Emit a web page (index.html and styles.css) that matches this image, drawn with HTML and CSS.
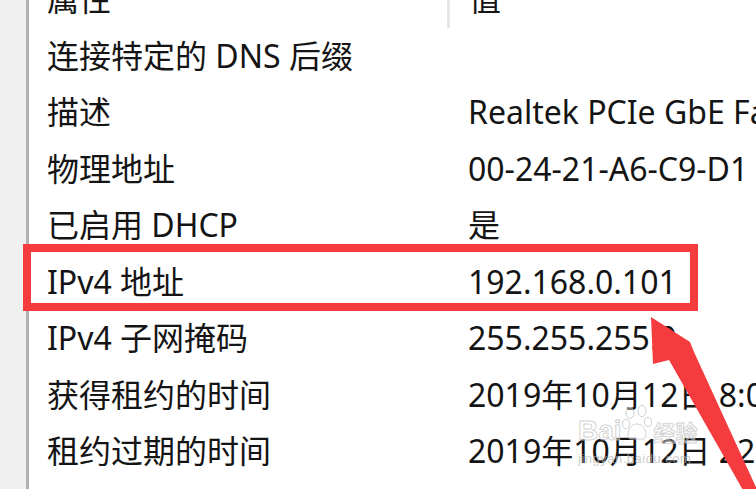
FILE: index.html
```html
<!DOCTYPE html>
<html lang="zh-CN">
<head>
  <meta charset="UTF-8">
  <title>网络连接详细信息</title>
  <link rel="stylesheet" href="styles.css">
</head>
<body>
  <div class="frame">
    <div class="gutter"></div>
    <div class="details">
      <div class="row head">
        <div class="cell name">属性</div>
        <div class="cell value">值</div>
      </div>
      <div class="row">
        <div class="cell name">连接特定的 DNS 后缀</div>
        <div class="cell value"></div>
      </div>
      <div class="row">
        <div class="cell name">描述</div>
        <div class="cell value">Realtek PCIe GbE Family Controller</div>
      </div>
      <div class="row">
        <div class="cell name">物理地址</div>
        <div class="cell value">00-24-21-A6-C9-D1</div>
      </div>
      <div class="row">
        <div class="cell name">已启用 DHCP</div>
        <div class="cell value">是</div>
      </div>
      <div class="row marked">
        <div class="cell name">IPv4 地址</div>
        <div class="cell value">192.168.0.101</div>
      </div>
      <div class="row">
        <div class="cell name">IPv4 子网掩码</div>
        <div class="cell value">255.255.255.0</div>
      </div>
      <div class="row">
        <div class="cell name">获得租约的时间</div>
        <div class="cell value">2019年10月12日 8:03:47</div>
      </div>
      <div class="row">
        <div class="cell name">租约过期的时间</div>
        <div class="cell value">2019年10月12日 22:03:47</div>
      </div>
    </div>

    <!-- watermark -->
    <div class="watermark">
      <div class="wm-logo">
        <span>Bai</span>
        <svg class="paw" width="30" height="36" viewBox="0 0 30 36">
          <ellipse cx="8" cy="8" rx="4" ry="5.5" />
          <ellipse cx="20" cy="6" rx="4" ry="5.5" />
          <ellipse cx="4" cy="19" rx="3.5" ry="4.5" />
          <ellipse cx="26" cy="17" rx="3.5" ry="4.5" />
          <path d="M6 31 C6 22 11 19 15 19 C19 19 24 22 24 31 C24 35 19 34 15 34 C11 34 6 35 6 31 Z" />
        </svg>
        <span class="cn">经验</span>
      </div>
      <div class="wm-url">jingyan.baidu.com</div>
    </div>

    <!-- annotation arrow -->
    <svg class="arrow" width="756" height="489" viewBox="0 0 756 489">
      <polygon points="651,317 690,342 694,352 771,520 760,520 669,360 653,364" />
    </svg>
  </div>
</body>
</html>
```

FILE: styles.css
```css
html, body {
  margin: 0;
  background: #fff;
}
body {
  font-family: 'Noto Sans', 'Noto Sans CJK SC', sans-serif;
  color: #141414;
  overflow: hidden;
}
.frame {
  position: relative;
  display: flex;
  width: 756px;
  height: 489px;
  overflow: hidden;
}
.gutter {
  width: 26px;
  background: #f0f0f0;
  border-right: 3px solid #b1b1b1;
  flex-shrink: 0;
}
.details {
  flex: 1;
  min-width: 0;
  margin-top: -29px;
}
.row {
  display: grid;
  grid-template-columns: 418px minmax(0, 1fr);
  height: 56.5px;
  font-size: 32px;
  line-height: 1;
  white-space: nowrap;
}
.cell {
  display: flex;
  align-items: center;
  min-width: 0;
}
.name {
  padding-left: 18px;
}
.value {
  padding-left: 21px;
}
.head .value {
  border-left: 3px solid #e6e6e6;
  padding-left: 19px;
}
.marked {
  position: relative;
}
.marked::after {
  content: "";
  position: absolute;
  left: -6px;
  right: 58px;
  top: -10px;
  bottom: -1px;
  border: 8px solid #f43c3f;
  box-sizing: border-box;
}
.arrow {
  position: absolute;
  top: 0;
  left: 0;
  pointer-events: none;
}
.arrow polygon {
  fill: #f43c3f;
}
.watermark {
  position: absolute;
  left: 578px;
  top: 405px;
  color: rgba(255,255,255,0.4);
  pointer-events: none;
}
.wm-logo {
  display: flex;
  align-items: flex-end;
  font-family: 'Liberation Sans', sans-serif;
  font-size: 28px;
  font-weight: bold;
  -webkit-text-stroke: 1px rgba(190,190,190,0.7);
}
.wm-logo .cn {
  font-family: 'Noto Sans CJK SC', sans-serif;
  font-size: 22px;
  margin-left: 2px;
}
.paw {
  margin: 0 0 6px 0;
}
.paw ellipse, .paw path {
  fill: rgba(255,255,255,0.4);
  stroke: rgba(190,190,190,0.7);
  stroke-width: 1;
}
.wm-url {
  font-family: 'Liberation Sans', sans-serif;
  font-size: 13px;
  letter-spacing: 0.5px;
  color: rgba(180,180,180,0.7);
  margin-top: 4px;
}
```
